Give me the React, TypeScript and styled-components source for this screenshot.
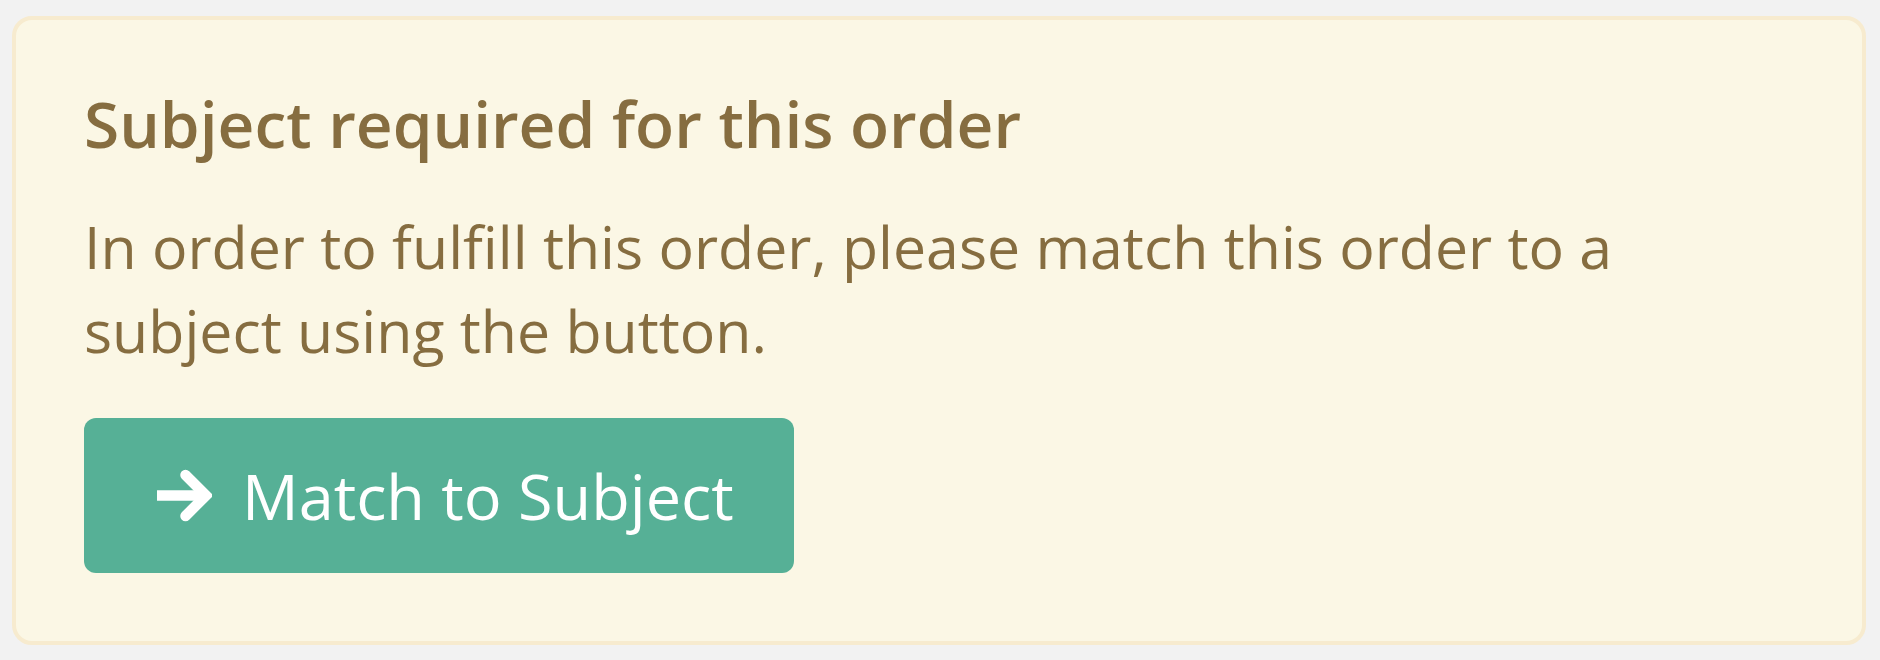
import React from "react";
import styled, { createGlobalStyle } from "styled-components";

const GlobalStyle = createGlobalStyle`
  html, body {
    margin: 0;
    padding: 0;
    background: #f2f2f2;
  }
  body {
    font-family: "Open Sans", "Noto Sans", "Liberation Sans", sans-serif;
  }
  * { box-sizing: border-box; }
`;

const Page = styled.div`
  padding: 16px 14px 15px 12px;
`;

const Alert = styled.section`
  background: #fbf7e5;
  border: 4px solid #f7ebcf;
  border-radius: 20px;
  padding: 64px 68px 68px 68px;
  color: #866d40;
  display: flex;
  flex-direction: column;
  align-items: flex-start;
`;

const Title = styled.h2`
  margin: 0;
  font-size: 64px;
  line-height: 79px;
  font-weight: 600;
`;

const Message = styled.p`
  margin: 41px 0 46px;
  font-size: 59px;
  line-height: 84px;
  font-weight: 400;
  max-width: 1560px;
`;

const Button = styled.button`
  display: inline-flex;
  align-items: center;
  gap: 30px;
  height: 155px;
  padding: 0 60px 0 72px;
  border: none;
  border-radius: 12px;
  background: #56b096;
  color: #ffffff;
  font-family: inherit;
  font-size: 63px;
  line-height: 90px;
  font-weight: 400;
  cursor: pointer;
`;

const ArrowIcon = () => (
  <svg width="56" height="54" viewBox="0 0 56 54" aria-hidden="true">
    <path
      d="M1 26.5 H46"
      stroke="#fff"
      strokeWidth="10.7"
      strokeLinecap="butt"
      fill="none"
    />
    <path
      d="M29.5 6 L50 26.5 L29.5 47"
      stroke="#fff"
      strokeWidth="10.5"
      strokeLinecap="round"
      strokeLinejoin="miter"
      fill="none"
    />
  </svg>
);

export default function App() {
  return (
    <>
      <GlobalStyle />
      <Page>
        <Alert>
          <Title>Subject required for this order</Title>
          <Message>
            In order to fulfill this order, please match this order to a subject
            using the button.
          </Message>
          <Button type="button">
            <ArrowIcon />
            <span>Match to Subject</span>
          </Button>
        </Alert>
      </Page>
    </>
  );
}
